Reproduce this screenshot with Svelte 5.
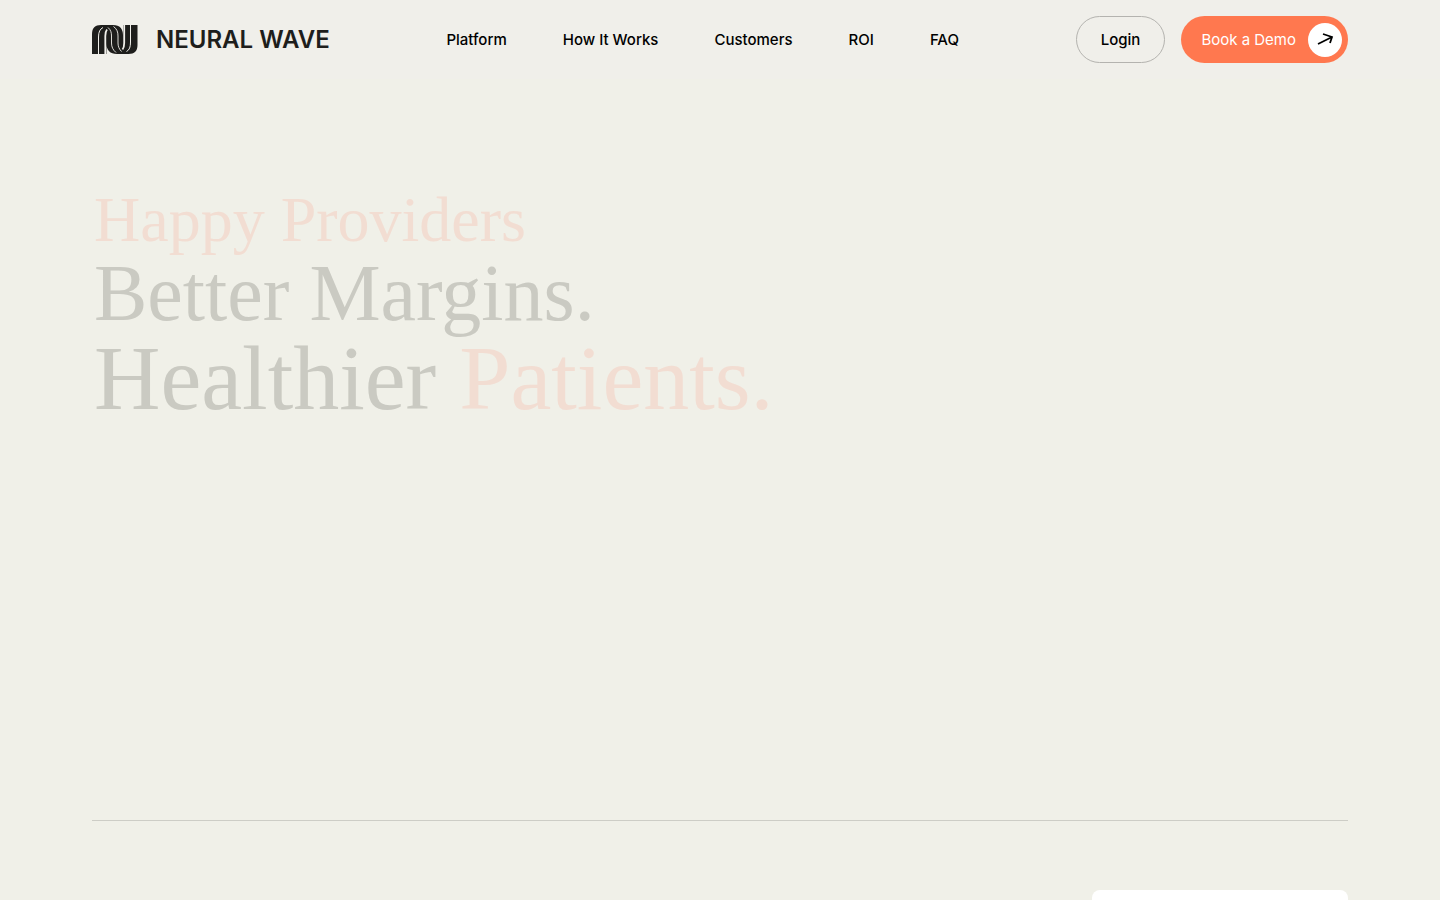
<script lang="ts">
  const links = [
    { label: "Platform", href: "#platform" },
    { label: "How It Works", href: "#how-it-works" },
    { label: "Customers", href: "#customers" },
    { label: "ROI", href: "#roi" },
    { label: "FAQ", href: "#faq" },
  ];
</script>

<div class="page">
  <header class="header">
    <a class="brand" href="#home">
      <svg class="mark" viewBox="0 0 46 29" aria-hidden="true">
        <path
          fill="#1e1e1c"
          d="M0 29V9C0 3 3 0 9 0H21C28 0 31 4 31 10V0H45.500V20C45.500 26 42.500 29 36.500 29H25C18 29 14.500 25 14.500 19V29Z"
        />
        <g fill="none" stroke="#f0efea">
          <path stroke-width="1" d="M6.500 29V12C6.500 7 8 4 11 2.500" />
          <path stroke-width="1.800" d="M13.300 29V11C13.300 8 13.800 6 15 4.500" />
          <path stroke-width="0.900" d="M16 2.500C19 5 19.500 8 19.500 11V18C19.500 22 21 25 24 27.500" />
          <path stroke-width="0.900" d="M21.500 1.500C25 4 26 7 26 11V18C26 21 27 24 29.500 26.500" />
          <path stroke-width="1.800" d="M32.200 0V18C32.200 21 31.700 23 30.500 24.500" />
          <path stroke-width="1" d="M38.500 0V17C38.500 22 37.500 25 34.500 26.500" />
        </g>
      </svg>
      <span class="wordmark">NEURAL WAVE</span>
    </a>

    <nav class="nav" aria-label="Main">
      {#each links as link}
        <a href={link.href}>{link.label}</a>
      {/each}
    </nav>

    <div class="actions">
      <a class="login" href="#login">Login</a>
      <a class="demo" href="#demo">
        <span>Book a Demo</span>
        <span class="arrow">
          <svg viewBox="0 0 18 18" aria-hidden="true">
            <path d="M2 13L16 6M7 3L16 6L14 12" fill="none" stroke="#000" stroke-width="1.800" />
          </svg>
        </span>
      </a>
    </div>
  </header>

  <main class="main">
    <h1 class="title">
      <span class="line small accent">Happy Providers</span>
      <span class="line medium">Better Margins.</span>
      <span class="line large">Healthier <span class="accent">Patients.</span></span>
    </h1>
  </main>

  <section class="next">
    <div class="card"></div>
  </section>
</div>

<style>
  :global(body) {
    margin: 0;
    background: #f0f0e8;
  }

  .page {
    min-height: 100vh;
    display: flex;
    flex-direction: column;
    font-family: Inter, "Liberation Sans", sans-serif;
    color: #000;
  }

  a {
    color: inherit;
    text-decoration: none;
  }

  .header {
    padding: 16px 92px;
    display: flex;
    align-items: center;
    justify-content: space-between;
    background: #f0efea;
    font-size: 15px;
    font-weight: 500;
    line-height: 24px;
    white-space: nowrap;
  }

  .brand {
    display: flex;
    align-items: center;
    gap: 18px;
    color: #1e1e1c;
  }

  .mark {
    width: 46px;
    height: 29px;
  }

  .wordmark {
    font-size: 24px;
    font-weight: 600;
  }

  .nav {
    display: flex;
    gap: 56px;
  }

  .actions {
    display: flex;
    gap: 16px;
  }

  .login,
  .demo {
    height: 47px;
    box-sizing: border-box;
    display: flex;
    align-items: center;
    border-radius: 24px;
  }

  .login {
    padding: 0 24px;
    border: 1px solid #b4b3af;
  }

  .demo {
    gap: 12px;
    padding: 0 6px 0 20px;
    background: #ff784f;
    color: #fff;
    font-weight: 400;
  }

  .arrow {
    width: 34px;
    height: 34px;
    display: grid;
    place-items: center;
    border-radius: 50%;
    background: #fff;
  }

  .arrow svg {
    width: 18px;
    height: 18px;
  }

  .main {
    flex: 1;
    margin: 0 92px;
    padding: 105px 2px 48px;
    border-bottom: 1px solid #cdcdc6;
  }

  .title {
    margin: 0;
    font-family: "Liberation Serif", serif;
    font-weight: 400;
    color: #cacac2;
  }

  .line {
    display: block;
  }

  .accent {
    color: #f2ddd2;
  }

  .small {
    font-size: 64px;
    line-height: 72px;
  }

  .medium {
    font-size: 80px;
    line-height: 74px;
  }

  .large {
    font-size: 92px;
    line-height: 96px;
  }

  .next {
    padding: 69px 92px 0;
    display: flex;
    justify-content: flex-end;
  }

  .card {
    width: 256px;
    height: 10px;
    border-radius: 8px 8px 0 0;
    background: #fff;
  }
</style>
